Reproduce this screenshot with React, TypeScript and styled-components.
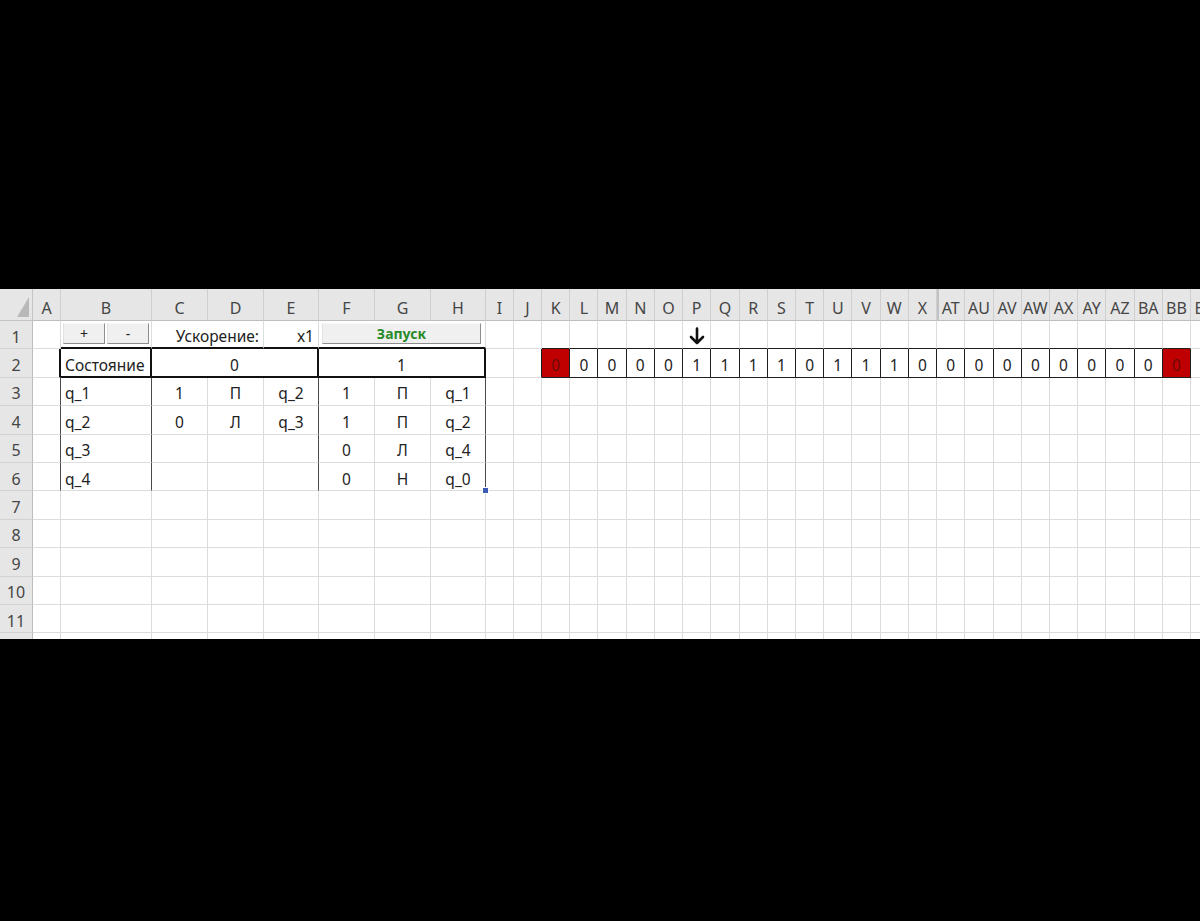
import React from 'react';
import styled, { createGlobalStyle, css } from 'styled-components';

const GlobalStyle = createGlobalStyle`
  html, body {
    margin: 0;
    padding: 0;
    background: #000;
  }
  * {
    box-sizing: border-box;
  }
`;

type Edge = 'grid' | 'thin' | 'thick' | 'dark' | 'none';

const EDGES: Record<Edge, string> = {
  grid: '1px solid #dcdcdc',
  thin: '1px solid #1e1e1e',
  thick: '2px solid #111',
  dark: '1px solid #4a4a4a',
  none: '0',
};

interface ColDef {
  key: string;
  width: number;
}

const TAPE_KEYS = ['K', 'L', 'M', 'N', 'O', 'P', 'Q', 'R', 'S', 'T', 'U', 'V', 'W', 'X', 'AT', 'AU', 'AV', 'AW', 'AX', 'AY', 'AZ', 'BA', 'BB'];
const TAPE = [0, 0, 0, 0, 0, 1, 1, 1, 1, 0, 1, 1, 1, 0, 0, 0, 0, 0, 0, 0, 0, 0, 0];
const TAPE_W = 28.22;

const COLS: ColDef[] = [
  { key: 'A', width: 28 },
  { key: 'B', width: 91 },
  { key: 'C', width: 56 },
  { key: 'D', width: 56 },
  { key: 'E', width: 55 },
  { key: 'F', width: 56 },
  { key: 'G', width: 56 },
  { key: 'H', width: 55 },
  { key: 'I', width: 28 },
  { key: 'J', width: 28 },
  ...TAPE_KEYS.map((key) => ({ key, width: TAPE_W })),
  { key: 'BC', width: TAPE_W },
];

const RULES: Record<string, [string, string, string][]> = {
  '3': [['q_1', '', ''], ['1', 'П', 'q_2'], ['1', 'П', 'q_1']],
  '4': [['q_2', '', ''], ['0', 'Л', 'q_3'], ['1', 'П', 'q_2']],
  '5': [['q_3', '', ''], ['', '', ''], ['0', 'Л', 'q_4']],
  '6': [['q_4', '', ''], ['', '', ''], ['0', 'Н', 'q_0']],
};

const Screen = styled.div`
  height: 921px;
  padding-top: 289px;
  background: #000;
  overflow: hidden;
`;

const Viewport = styled.div`
  width: 1200px;
  height: 350px;
  overflow: hidden;
  background: #fff;
`;

const Sheet = styled.div`
  display: grid;
  grid-template-columns: 33px ${COLS.map((c) => `${c.width}px`).join(' ')};
  grid-template-rows: 32px repeat(12, 28.4px);
  width: max-content;
  font-family: 'Noto Sans', 'Open Sans', sans-serif;
  font-size: 15.5px;
  color: #222;
`;

const Corner = styled.div`
  position: relative;
  background: #e6e6e6;
  border-right: 1px solid #c4c4c4;
  border-bottom: 1px solid #c4c4c4;

  svg {
    position: absolute;
    right: 3px;
    bottom: 3px;
  }
`;

const ColHead = styled.div<{ $hiddenBefore?: boolean }>`
  display: flex;
  align-items: center;
  justify-content: center;
  padding-top: 6px;
  background: #e6e6e6;
  color: #454545;
  font-size: 16px;
  white-space: nowrap;
  border-right: 1px solid #cfcfcf;
  border-bottom: 1px solid #bdbdbd;
  ${(p) =>
    p.$hiddenBefore &&
    css`
      box-shadow: inset 2px 0 0 #c2c2c2;
    `}
`;

const RowHead = styled.div`
  display: flex;
  align-items: center;
  justify-content: center;
  padding-top: 4px;
  background: #e6e6e6;
  color: #454545;
  font-size: 16px;
  border-right: 1px solid #bdbdbd;
  border-bottom: 1px solid #d2d2d2;
`;

interface CellProps {
  $span?: number;
  $align?: 'left' | 'center' | 'right';
  $r?: Edge;
  $b?: Edge;
}

const Cell = styled.div<CellProps>`
  position: relative;
  display: flex;
  align-items: center;
  justify-content: ${(p) => (p.$align === 'left' ? 'flex-start' : p.$align === 'right' ? 'flex-end' : 'center')};
  padding: 4px 4px 0 4px;
  grid-column: span ${(p) => p.$span ?? 1};
  white-space: nowrap;
  min-width: 0;
  border-right: ${(p) => EDGES[p.$r ?? 'grid']};
  border-bottom: ${(p) => EDGES[p.$b ?? 'grid']};
`;

const TapeCell = styled.div<{ $end?: boolean }>`
  display: flex;
  align-items: center;
  justify-content: center;
  padding-top: 3px;
  border-right: ${EDGES.thin};
  border-bottom: ${EDGES.thin};
  background: ${(p) => (p.$end ? '#c00000' : '#fff')};
  color: ${(p) => (p.$end ? '#6a0b0b' : '#222')};
`;

const ButtonRow = styled.div`
  display: flex;
  gap: 2px;
  width: 100%;
  height: 100%;
  padding: 2px 0 3px;
`;

const FormButton = styled.div<{ $wide?: boolean }>`
  flex: 1;
  display: flex;
  align-items: center;
  justify-content: center;
  height: 100%;
  background: #f0f0f0;
  border-top: 1px solid #f7f7f7;
  border-left: 1px solid #e2e2e2;
  border-right: 1px solid #8d8d8d;
  border-bottom: 1px solid #8d8d8d;
  font-size: 14px;
  font-weight: ${(p) => (p.$wide ? 700 : 400)};
  color: ${(p) => (p.$wide ? '#2a8b2a' : '#222')};
`;

const ButtonSlot = styled.div`
  grid-column: span 3;
  display: flex;
  padding: 2px 4px 3px 3px;
  border-right: ${EDGES.grid};
  border-bottom: ${EDGES.thick};
`;

const FillHandle = styled.span`
  position: absolute;
  right: -4px;
  bottom: -4px;
  width: 7px;
  height: 7px;
  background: #3b5bb5;
  border: 1px solid #fff;
  z-index: 2;
`;

function CornerMark() {
  return (
    <Corner>
      <svg width='12' height='20' viewBox='0 0 12 20'>
        <polygon points='12,0 12,20 0,20' fill='#b9b9b9' />
      </svg>
    </Corner>
  );
}

function HeadArrow() {
  return (
    <svg width='16' height='18' viewBox='0 0 16 18' style={{ marginTop: -2 }}>
      <path d='M8 1.5 V16 M2 10 L8 16 L14 10' fill='none' stroke='#111' strokeWidth='2.6' strokeLinecap='round' strokeLinejoin='round' />
    </svg>
  );
}

function EmptyTail({ row, from }: { row: number; from: number }) {
  return (
    <>
      {COLS.slice(from).map((c) => (
        <Cell key={`${row}-${c.key}`} />
      ))}
    </>
  );
}

function RuleRow({ row }: { row: string }) {
  const [state, zero, one] = RULES[row];
  const last = row === '6';
  return (
    <>
      <RowHead>{row}</RowHead>
      <Cell $r='dark' />
      <Cell $align='left' $r='dark'>
        {state[0]}
      </Cell>
      <Cell>{zero[0]}</Cell>
      <Cell>{zero[1]}</Cell>
      <Cell $r='dark'>{zero[2]}</Cell>
      <Cell>{one[0]}</Cell>
      <Cell>{one[1]}</Cell>
      <Cell $r='dark'>
        {one[2]}
        {last && <FillHandle />}
      </Cell>
      <EmptyTail row={Number(row)} from={8} />
    </>
  );
}

export default function App() {
  return (
    <>
      <GlobalStyle />
      <Screen>
        <Viewport>
          <Sheet>
            <CornerMark />
            {COLS.map((c) => (
              <ColHead key={c.key} $hiddenBefore={c.key === 'AT'}>
                {c.key}
              </ColHead>
            ))}

            {/* row 1 */}
            <RowHead>1</RowHead>
            <Cell />
            <Cell $b='thick' style={{ padding: '0 2px' }}>
              <ButtonRow>
                <FormButton>+</FormButton>
                <FormButton>-</FormButton>
              </ButtonRow>
            </Cell>
            <Cell $span={2} $align='right' $b='thick'>
              Ускорение:
            </Cell>
            <Cell $align='right' $b='thick'>
              x1
            </Cell>
            <ButtonSlot>
              <FormButton $wide>Запуск</FormButton>
            </ButtonSlot>
            <Cell />
            <Cell />
            {TAPE_KEYS.map((k) => (
              <Cell key={`1-${k}`} $b='thin'>
                {k === 'P' && <HeadArrow />}
              </Cell>
            ))}
            <Cell />

            {/* row 2 */}
            <RowHead>2</RowHead>
            <Cell $r='thick' />
            <Cell $align='left' $r='thick' $b='thick'>
              Состояние
            </Cell>
            <Cell $span={3} $r='thick' $b='thick'>
              0
            </Cell>
            <Cell $span={3} $r='thick' $b='thick'>
              1
            </Cell>
            <Cell />
            <Cell $r='thin' />
            {TAPE.map((v, i) => (
              <TapeCell key={`2-${i}`} $end={i === 0 || i === TAPE.length - 1}>
                {v}
              </TapeCell>
            ))}
            <Cell />

            {['3', '4', '5', '6'].map((r) => (
              <RuleRow key={r} row={r} />
            ))}

            {[7, 8, 9, 10, 11, 12].map((r) => (
              <React.Fragment key={r}>
                <RowHead>{r < 12 ? r : ''}</RowHead>
                <EmptyTail row={r} from={0} />
              </React.Fragment>
            ))}
          </Sheet>
        </Viewport>
      </Screen>
    </>
  );
}
